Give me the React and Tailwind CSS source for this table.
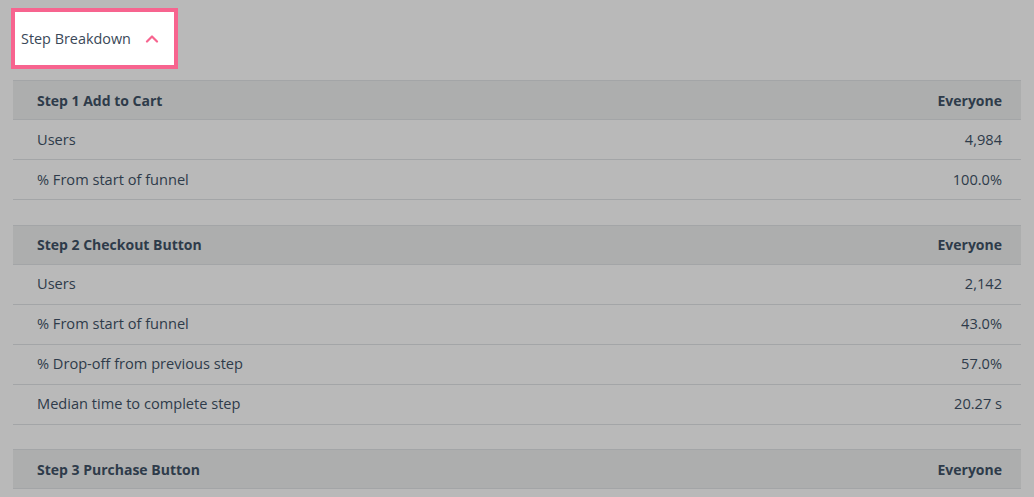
import React from 'react';

const steps = [
    {
        title: "Step 1 Add to Cart",
        rows: [
            ["Users", "4,984"],
            ["% From start of funnel", "100.0%"],
        ],
    },
    {
        title: "Step 2 Checkout Button",
        rows: [
            ["Users", "2,142"],
            ["% From start of funnel", "43.0%"],
            ["% Drop-off from previous step", "57.0%"],
            ["Median time to complete step", "20.27 s"],
        ],
    },
    {
        title: "Step 3 Purchase Button",
        rows: [],
    },
];

export default function App() {
    return (
        <div className="w-[1034px] h-[497px] overflow-hidden bg-[#b9b9b9] text-[#2e3b4a] text-[14px]" style={{ fontFamily: "'Open Sans', Lato, sans-serif" }}>
            {/* Toggle */}
            <div className="pt-[8px] pl-[11px]">
                <button className="flex items-center h-[61px] w-[167px] bg-white border-4 border-[#f7648f] pl-[6px] gap-[14px]">
                    <span className="text-[14.4px] text-[#3a4858]">Step Breakdown</span>
                    <svg width="14" height="9" viewBox="0 0 14 9" fill="none">
                        <path d="M2 7.5 L7 2.5 L12 7.5" stroke="#f7648f" strokeWidth="2.2" strokeLinecap="round" strokeLinejoin="round" />
                    </svg>
                </button>
            </div>

            {/* Table */}
            <div className="mt-[11px] ml-[13px] w-[1008px] flex flex-col gap-[24.5px]">
                {steps.map((step) => (
                    <div key={step.title}>
                        <div className="flex items-center justify-between h-[40px] bg-[#adaeae] border-y border-[#a3a5a7] pl-[24px] pr-[19px] font-bold">
                            <span>{step.title}</span>
                            <span>Everyone</span>
                        </div>
                        {step.rows.map(([label, value]) => (
                            <div key={label} className="flex items-center justify-between h-[40px] border-b border-[#a3a5a7] pl-[24px] pr-[19px] text-[14.6px]">
                                <span>{label}</span>
                                <span>{value}</span>
                            </div>
                        ))}
                    </div>
                ))}
            </div>
        </div>
    );
}
